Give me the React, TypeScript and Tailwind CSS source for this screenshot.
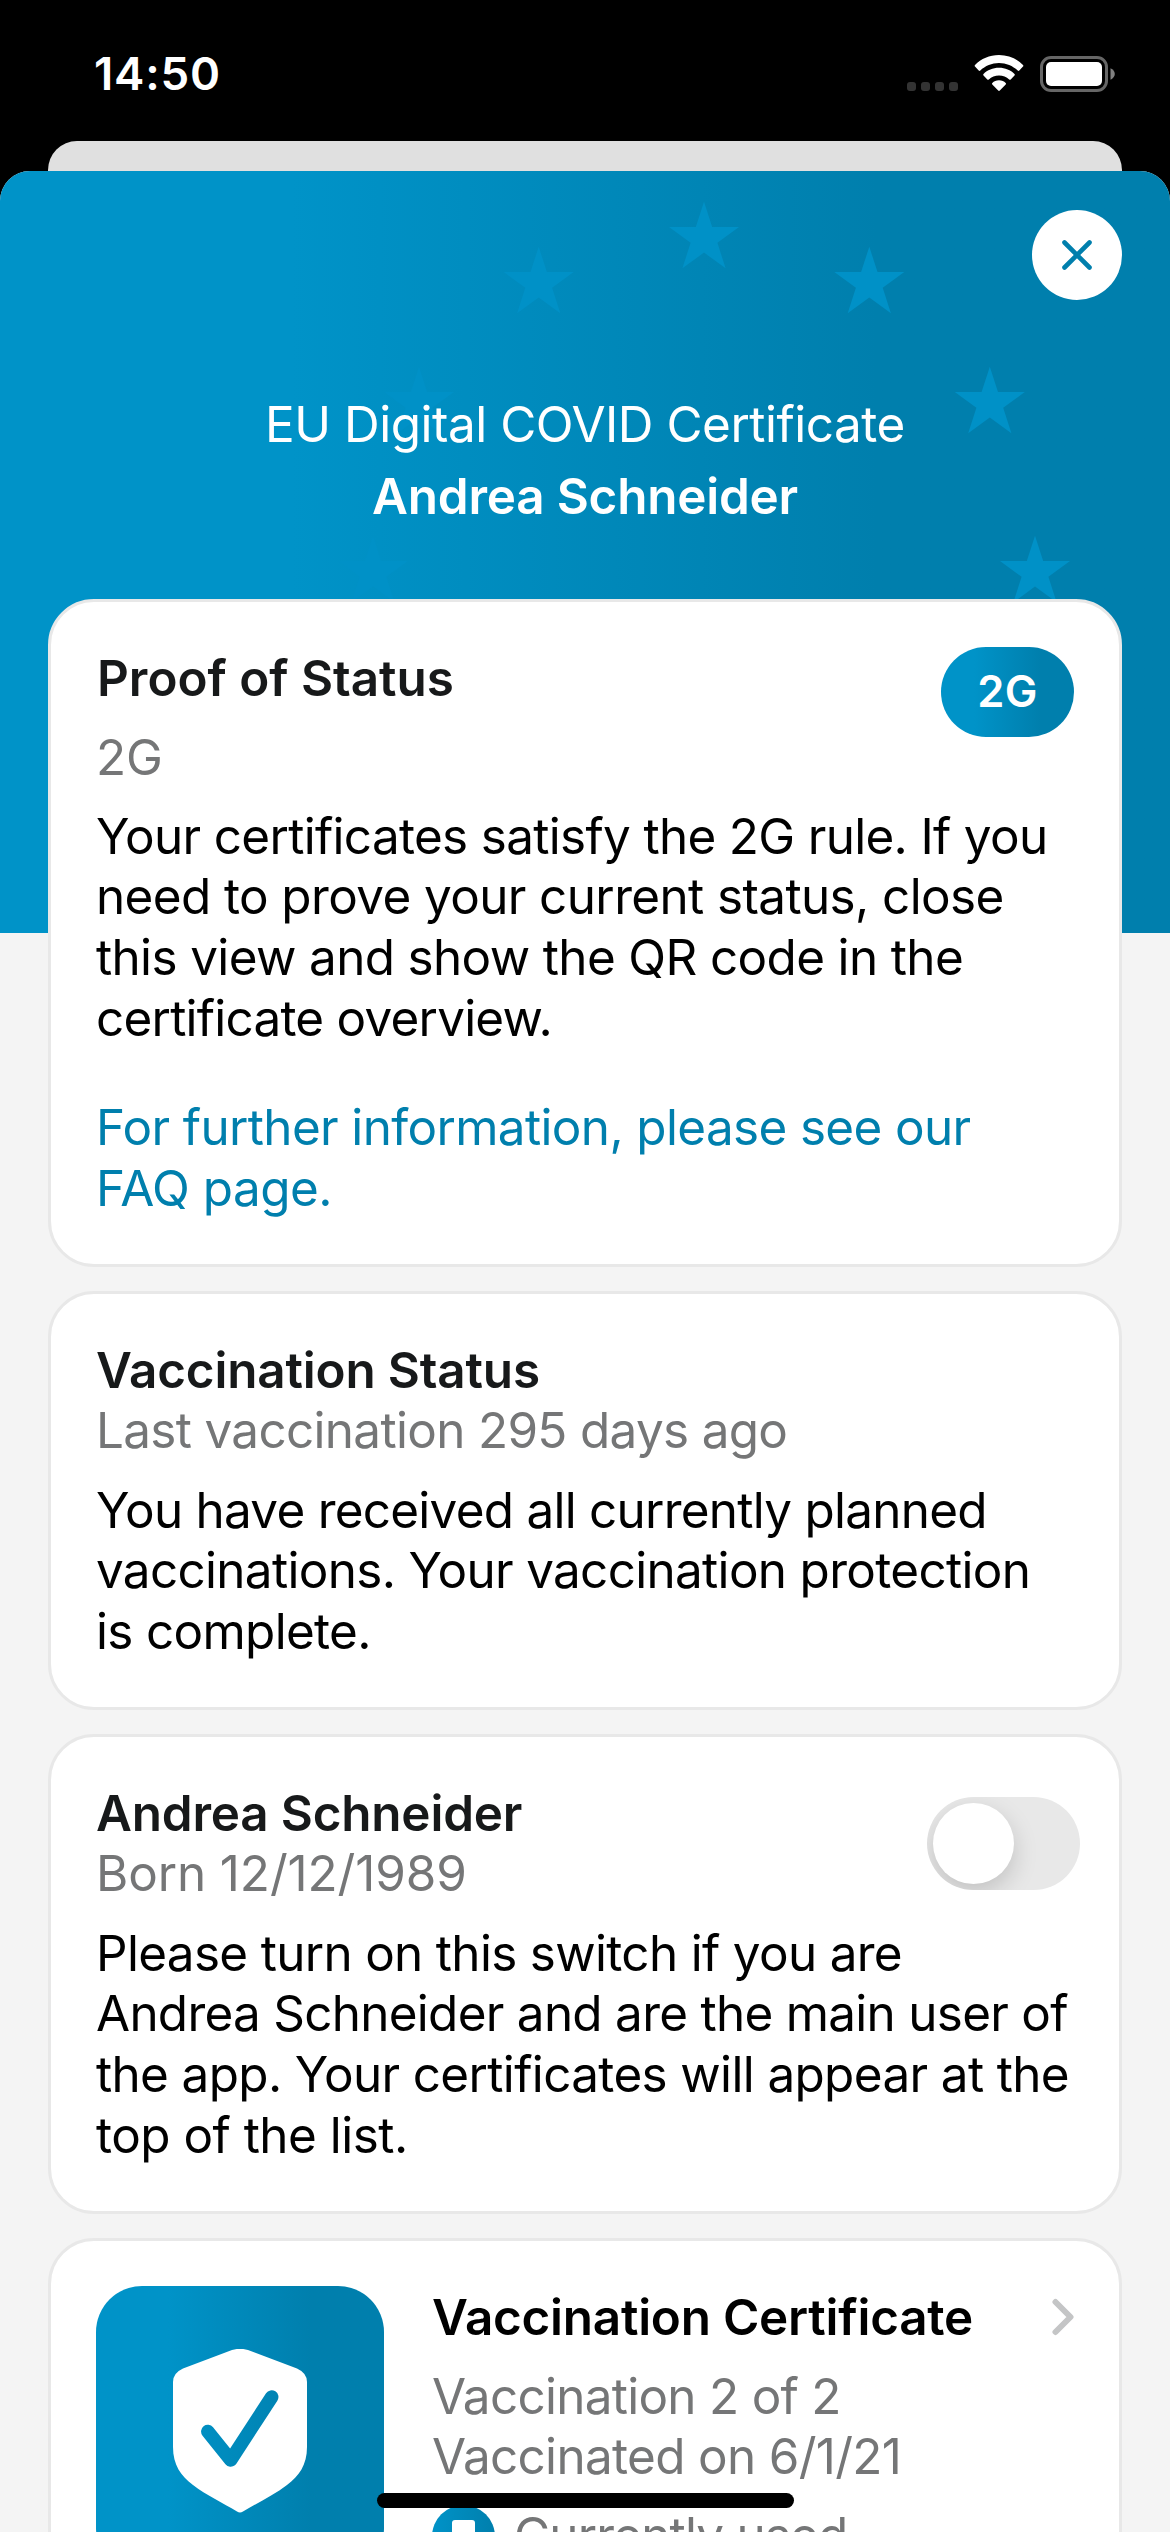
import type { ReactNode } from "react";

const STARS: [number, number][] = [
  [538.7, 246.7],
  [704, 201.7],
  [869.3, 246.7],
  [989.8, 366.7],
  [1035, 535.7],
  [419, 366.7],
  [373, 535.7],
];

/* Five-pointed star, outer radius 36.8, drawn from its upper tip. */
const STAR_PATH =
  "M0 0L8.2 25.3L35 25.4L13.4 41.1L21.6 66.6L0 50.9L-21.6 66.6L-13.4 41.1L-35 25.4L-8.2 25.3Z";

function StatusBar() {
  return (
    <header className="flex h-[141px] shrink-0 justify-between pl-[94px] pr-[55px]">
      <div className="mt-[46px] h-[56px] text-[45.6px] font-semibold leading-[56px] tracking-[0.8px] text-white">
        14:50
      </div>
      <div className="mt-[55px] flex h-[37px]">
        <div className="mt-[27px] flex gap-[5px]">
          <i className="size-[9px] rounded-[3px] bg-[#333]" />
          <i className="size-[9px] rounded-[3px] bg-[#333]" />
          <i className="size-[9px] rounded-[3px] bg-[#333]" />
          <i className="size-[9px] rounded-[3px] bg-[#333]" />
        </div>
        <svg className="ml-[16px] h-[37px] w-[50px]" viewBox="0 0 50 37" fill="white">
          <path d="M25 0C34.5 0 42.9 3.8 49 9.9C49.5 10.4 49.5 11.1 49 11.6L45.3 15.5C44.8 16 44.2 16 43.7 15.5C38.8 10.9 32.2 8 25 8C17.8 8 11.2 10.9 6.3 15.5C5.8 16 5.2 16 4.7 15.5L1 11.6C0.5 11.1 0.5 10.4 1 9.9C7.1 3.8 15.5 0 25 0Z" />
          <path d="M25 12.8C31.2 12.8 36.6 15.2 40.5 18.9C41 19.4 41 20 40.5 20.5L36.7 24.4C36.2 24.9 35.7 24.9 35.2 24.4C32.5 22 29 20.4 25 20.4C21 20.4 17.5 22 14.8 24.4C14.3 24.9 13.8 24.9 13.3 24.4L9.5 20.5C9 20 9 19.4 9.5 18.9C13.4 15.2 18.8 12.8 25 12.8Z" />
          <path d="M25 25.3C27.8 25.3 30 26.3 31.7 27.9C32.2 28.4 32.2 29 31.7 29.5L25.8 35.5C25.3 36 24.7 36 24.2 35.5L18.3 29.5C17.8 29 17.8 28.4 18.3 27.9C20 26.3 22.2 25.3 25 25.3Z" />
        </svg>
        <svg className="ml-[16px] h-[37px] w-[75px]" viewBox="0 0 75 37">
          <rect x="1.5" y="2.5" width="65" height="33" rx="9.5" fill="none" stroke="#666" strokeWidth="3" />
          <rect x="6" y="7" width="56" height="24" rx="5" fill="white" />
          <path d="M70.5 13.3C73 14.4 74.8 16.5 74.8 19C74.8 21.5 73 23.6 70.5 24.7Z" fill="#808080" />
        </svg>
      </div>
    </header>
  );
}

function Card({ className, children }: { className: string; children: ReactNode }) {
  return (
    <section
      className={
        "relative shrink-0 rounded-[46px] border-[3px] border-[#e8e8e8] bg-white px-[45px] leading-[60.67px] text-[49.4px] tracking-[-0.66px] " +
        className
      }
    >
      {children}
    </section>
  );
}

function Line({ className = "", children }: { className?: string; children: ReactNode }) {
  return <span className={"block whitespace-nowrap " + className}>{children}</span>;
}

export default function App() {
  return (
    <div className="relative flex h-[2532px] w-[1170px] flex-col overflow-hidden bg-black font-['Inter',sans-serif]">
      <StatusBar />
      <div className="mx-[48px] h-[60px] shrink-0 rounded-t-[29px] bg-[#e0e0e0]" />

      <main className="relative -mt-[30px] flex h-[2361px] shrink-0 flex-col overflow-hidden rounded-t-[30px] bg-[#f4f4f4]">
        <div className="absolute inset-x-0 top-0 h-[762px] bg-linear-to-r from-[#0093c8] from-25% to-[#007fad] to-75%" />
        <svg className="absolute left-0 top-0 h-[762px] w-[1170px]" viewBox="0 171 1170 762" fill="#0091c7">
          {STARS.map(([x, y]) => (
            <path key={x} d={STAR_PATH} transform={`translate(${x} ${y})`} />
          ))}
        </svg>

        <div className="relative flex h-[428px] shrink-0 flex-col items-center text-[49.4px] leading-[61px] text-white">
          <button className="mr-[48px] mt-[39px] flex size-[90px] shrink-0 items-center justify-center self-end rounded-full bg-white">
            <svg className="size-[34px]" viewBox="0 0 34 34" fill="none" stroke="#007fad" strokeWidth="4.6" strokeLinecap="round">
              <path d="M4.5 4.5L29.5 29.5M29.5 4.5L4.5 29.5" />
            </svg>
          </button>
          <p className="mt-[94px] whitespace-nowrap tracking-[-0.46px]">EU Digital COVID Certificate</p>
          <p className="mt-[11px] whitespace-nowrap font-semibold tracking-[-0.2px]">Andrea Schneider</p>
        </div>

        <div className="relative flex flex-col gap-[24px] px-[48px]">
          <Card className="h-[668px] pt-[45.8px]">
            <div className="flex justify-between">
              <div>
                <h2 className="pl-px font-semibold tracking-[0px] text-[#17191a]">Proof of Status</h2>
                <p className="mt-[18.5px] tracking-[0px] text-[#757677]">2G</p>
              </div>
              <div className="-mt-[0.8px] flex h-[90px] w-[133px] items-center justify-center rounded-full bg-linear-to-r from-[#0093c8] from-25% to-[#007fad] to-75% text-[43.6px] font-semibold tracking-[0.3px] text-white">
                2G
              </div>
            </div>
            <p className="mt-[18px] text-black">
              <Line>Your certificates satisfy the 2G rule. If you</Line>
              <Line className="tracking-[-0.59px]">need to prove your current status, close</Line>
              <Line className="tracking-[-0.62px]">this view and show the QR code in the</Line>
              <Line className="tracking-[-0.75px]">certificate overview.</Line>
            </p>
            <p className="mt-[49px] text-[#007fad]">
              <Line className="tracking-[-0.62px]">For further information, please see our</Line>
              <Line className="tracking-[-0.5px]">FAQ page.</Line>
            </p>
          </Card>

          <Card className="h-[419px] pt-[45.8px]">
            <h2 className="font-semibold tracking-[-0.15px] text-[#17191a]">Vaccination Status</h2>
            <Line>
              <span className="text-[#757677]">Last vaccination 295 days ago</span>
            </Line>
            <p className="mt-[18.5px] text-black">
              <Line className="tracking-[-0.72px]">You have received all currently planned</Line>
              <Line>vaccinations. Your vaccination protection</Line>
              <Line>is complete.</Line>
            </p>
          </Card>

          <Card className="h-[480px] pt-[45.8px]">
            <div className="flex justify-between">
              <div>
                <h2 className="font-semibold tracking-[-0.18px] text-[#17191a]">Andrea Schneider</h2>
                <Line className="tracking-[-0.1px] text-[#757677]">Born 12/12/1989</Line>
              </div>
              <button className="-mr-[6px] mt-[14.2px] flex h-[93px] w-[153px] items-center overflow-hidden rounded-full bg-[#e8e8e8] pl-[6px]">
                <i className="size-[81px] rounded-full bg-white shadow-[0_9px_24px_rgba(0,0,0,0.17)]" />
              </button>
            </div>
            <p className="mt-[18.5px] text-black">
              <Line>Please turn on this switch if you are</Line>
              <Line className="tracking-[-0.7px]">Andrea Schneider and are the main user of</Line>
              <Line className="tracking-[-0.62px]">the app. Your certificates will appear at the</Line>
              <Line className="tracking-[-0.5px]">top of the list.</Line>
            </p>
          </Card>

          <Card className="flex h-[400px] pt-[45px]">
            <div className="flex size-[288px] shrink-0 justify-center rounded-[46px] bg-linear-to-r from-[#0093c8] from-25% to-[#007fad] to-75%">
              <svg className="mt-[63px] h-[164px] w-[134px]" viewBox="0 0 134 164">
                <defs>
                  <linearGradient id="tick" gradientUnits="userSpaceOnUse" x1="-5" y1="0" x2="139" y2="0">
                    <stop offset="0" stopColor="#0093c8" />
                    <stop offset="1" stopColor="#007fad" />
                  </linearGradient>
                </defs>
                <path
                  d="M59 1Q67 -1.4 75 1L124 19.5Q134 24 134 33V98C134 116 126 127 114 136C101 146 84 154 70 162.5Q67 164.4 64 162.5C50 154 33 146 20 136C8 127 0 116 0 98V33Q0 24 10 19.5Z"
                  fill="white"
                />
                <path
                  d="M34.8 82.5L57.7 111L98.7 48"
                  fill="none"
                  stroke="url(#tick)"
                  strokeWidth="13.5"
                  strokeLinecap="round"
                  strokeLinejoin="round"
                />
              </svg>
            </div>
            <div className="ml-[48px] flex-1 pt-[0.6px] text-[#757677]">
              <div className="flex items-start justify-between">
                <h2 className="font-semibold tracking-[-0.23px] text-black">Vaccination Certificate</h2>
                <svg className="mt-[11.4px] h-[38px] w-[22px]" viewBox="0 0 22 38" fill="none" stroke="#c4c5c6" strokeWidth="6" strokeLinecap="round" strokeLinejoin="round">
                  <path d="M3.5 4L18.5 19L3.5 34" />
                </svg>
              </div>
              <Line className="mt-[18.5px] tracking-[-0.7px]">Vaccination 2 of 2</Line>
              <Line>Vaccinated on 6/1/21</Line>
              <div className="mt-[17.6px] flex">
                <span className="mr-[19px] flex size-[63px] shrink-0 justify-center rounded-full bg-linear-to-r from-[#0093c8] to-[#007fad] pt-[15px]">
                  <i className="h-[32px] w-[23px] rounded-[3px] bg-white" />
                </span>
                <Line className="tracking-[-0.8px]">Currently used</Line>
              </div>
            </div>
          </Card>
        </div>
      </main>

      <div className="absolute bottom-[24px] left-[377px] h-[15px] w-[417px] rounded-full bg-black" />
    </div>
  );
}
